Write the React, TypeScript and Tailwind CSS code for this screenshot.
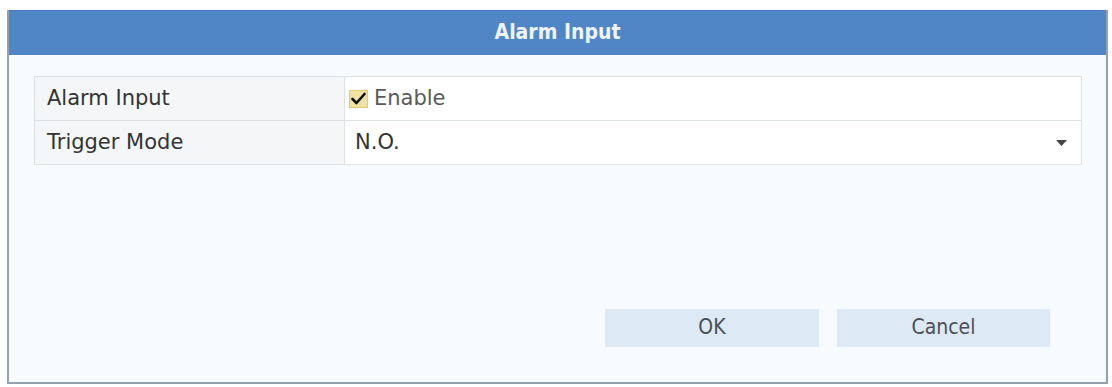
import React from "react";

const font = { fontFamily: '"DejaVu Sans", "Liberation Sans", sans-serif' };
const condensed = { fontFamily: '"DejaVu Sans Condensed", "DejaVu Sans", sans-serif' };

export default function App() {
  return (
    <div
      className="w-[1112px] h-[387px] bg-white pt-[10px] pl-[7px] pr-[4px] pb-[3px]"
      style={font}
    >
      <div className="w-full h-full flex flex-col border-l-2 border-r-2 border-b-2 border-[#93a2b1] bg-[#f8fbfd]">
        <div
          className="h-[45px] bg-[#5085c6] border-t border-[#4677b4] flex items-center justify-center text-[21px] text-[#eef4fb] font-semibold"
          style={condensed}
        >
          Alarm Input
        </div>
        <div className="flex-1 flex flex-col pl-[25px] pr-[24px] pt-[21px] pb-[35px]">
          <div className="border border-[#dde2e6] text-[21px]">
            <div className="flex h-[44px] border-b border-[#dde2e6]">
              <div className="w-[310px] bg-[#f4f6f8] border-r border-[#dde2e6] flex items-center pl-[12px] text-[#333]">
                Alarm Input
              </div>
              <div className="flex-1 bg-white flex items-center pl-[4px] text-[#5a5a5a]">
                <span className="w-[19px] h-[18px] bg-[#efe2a2] border border-[#e2cd72] flex items-center justify-center mr-[6px]">
                  <svg width="15" height="13" viewBox="0 0 15 13">
                    <path
                      d="M1.5 7 L5.5 11 L13.5 2"
                      fill="none"
                      stroke="#111"
                      strokeWidth="2.6"
                      strokeLinecap="round"
                      strokeLinejoin="round"
                    />
                  </svg>
                </span>
                Enable
              </div>
            </div>
            <div className="flex h-[43px]">
              <div className="w-[310px] bg-[#f4f6f8] border-r border-[#dde2e6] flex items-center pl-[12px] text-[#333]">
                Trigger Mode
              </div>
              <div className="flex-1 bg-white flex items-center justify-between pl-[10px] pr-[14px] text-[#333]">
                <span>N.O.</span>
                <svg width="11" height="6" viewBox="0 0 11 6">
                  <path d="M0 0 L11 0 L5.5 6 Z" fill="#444" />
                </svg>
              </div>
            </div>
          </div>
          <div className="mt-auto flex justify-end gap-[18px] pr-[32px]">
            <button
              className="w-[214px] h-[38px] bg-[#dde9f5] text-[#4a4f55] text-[21px]"
              style={condensed}
            >
              OK
            </button>
            <button
              className="w-[213px] h-[38px] bg-[#dde9f5] text-[#4a4f55] text-[21px]"
              style={condensed}
            >
              Cancel
            </button>
          </div>
        </div>
      </div>
    </div>
  );
}
